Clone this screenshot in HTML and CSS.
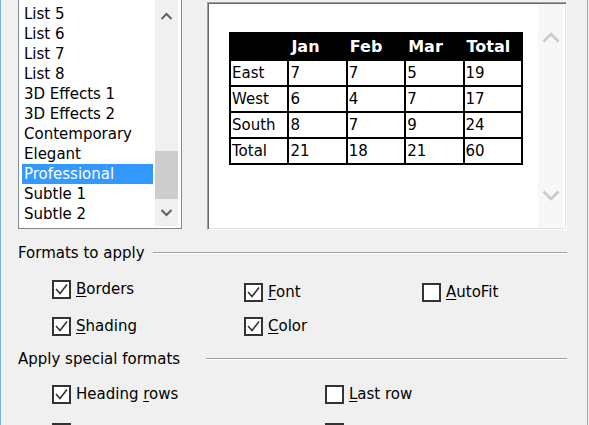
FILE: index.html
```html
<!DOCTYPE html>
<html>
<head>
<meta charset="utf-8">
<title>Table AutoFormat</title>
<link rel="stylesheet" href="styles.css">
</head>
<body>
<div class="window">
  <div class="top">
    <div class="listbox">
      <ul class="items">
        <li>List 5</li>
        <li>List 6</li>
        <li>List 7</li>
        <li>List 8</li>
        <li>3D Effects 1</li>
        <li>3D Effects 2</li>
        <li>Contemporary</li>
        <li>Elegant</li>
        <li class="sel">Professional</li>
        <li>Subtle 1</li>
        <li>Subtle 2</li>
      </ul>
      <div class="vscroll">
        <div class="arrow up"><svg width="13" height="8" viewBox="0 0 13 8"><polyline points="1.5,7 6.5,2 11.5,7" fill="none" stroke="#606060" stroke-width="2"/></svg></div>
        <div class="track"><div class="thumb"></div></div>
        <div class="arrow down"><svg width="13" height="8" viewBox="0 0 13 8"><polyline points="1.5,1 6.5,6 11.5,1" fill="none" stroke="#606060" stroke-width="2"/></svg></div>
      </div>
    </div>
    <div class="preview">
      <div class="canvas">
        <table class="sample">
          <thead>
            <tr><th></th><th>Jan</th><th>Feb</th><th>Mar</th><th>Total</th></tr>
          </thead>
          <tbody>
            <tr><td>East</td><td>7</td><td>7</td><td>5</td><td>19</td></tr>
            <tr><td>West</td><td>6</td><td>4</td><td>7</td><td>17</td></tr>
            <tr><td>South</td><td>8</td><td>7</td><td>9</td><td>24</td></tr>
            <tr><td>Total</td><td>21</td><td>18</td><td>21</td><td>60</td></tr>
          </tbody>
        </table>
      </div>
      <div class="vscroll disabled">
        <svg class="up" width="18" height="11" viewBox="0 0 18 11"><polyline points="1.5,9.5 9,2 16.5,9.5" fill="none" stroke="#c9c9c9" stroke-width="2.6"/></svg>
        <svg class="down" width="18" height="11" viewBox="0 0 18 11"><polyline points="1.5,1.5 9,9 16.5,1.5" fill="none" stroke="#c9c9c9" stroke-width="2.6"/></svg>
      </div>
    </div>
  </div>

  <section class="group first">
    <div class="group-title"><span>Formats to apply</span><span class="rule rule-a"></span></div>
    <div class="opts fmt">
      <div class="col c1">
        <label class="cb"><span class="box checked"><svg width="15" height="15" viewBox="0 0 15 15"><polyline points="2,7 6,11.5 13,2.5" fill="none" stroke="#333" stroke-width="1.6"/></svg></span><span class="txt"><u>B</u>orders</span></label>
        <label class="cb"><span class="box checked"><svg width="15" height="15" viewBox="0 0 15 15"><polyline points="2,7 6,11.5 13,2.5" fill="none" stroke="#333" stroke-width="1.6"/></svg></span><span class="txt"><u>S</u>hading</span></label>
      </div>
      <div class="col c2">
        <label class="cb"><span class="box checked"><svg width="15" height="15" viewBox="0 0 15 15"><polyline points="2,7 6,11.5 13,2.5" fill="none" stroke="#333" stroke-width="1.6"/></svg></span><span class="txt"><u>F</u>ont</span></label>
        <label class="cb"><span class="box checked"><svg width="15" height="15" viewBox="0 0 15 15"><polyline points="2,7 6,11.5 13,2.5" fill="none" stroke="#333" stroke-width="1.6"/></svg></span><span class="txt"><u>C</u>olor</span></label>
      </div>
      <div class="col c3">
        <label class="cb"><span class="box"></span><span class="txt"><u>A</u>utoFit</span></label>
      </div>
    </div>
  </section>

  <section class="group second">
    <div class="group-title"><span>Apply special formats</span><span class="rule rule-b"></span></div>
    <div class="opts special">
      <label class="cb"><span class="box checked"><svg width="15" height="15" viewBox="0 0 15 15"><polyline points="2,7 6,11.5 13,2.5" fill="none" stroke="#333" stroke-width="1.6"/></svg></span><span class="txt">Heading <u>r</u>ows</span></label>
      <label class="cb"><span class="box"></span><span class="txt"><u>L</u>ast row</span></label>
      <label class="cb"><span class="box checked"><svg width="15" height="15" viewBox="0 0 15 15"><polyline points="2,7 6,11.5 13,2.5" fill="none" stroke="#333" stroke-width="1.6"/></svg></span><span class="txt">First <u>c</u>olumn</span></label>
      <label class="cb"><span class="box"></span><span class="txt">Last c<u>o</u>lumn</span></label>
    </div>
  </section>
</div>
</body>
</html>
```

FILE: styles.css
```css
* { box-sizing: border-box; }

body {
  margin: 0;
  width: 589px;
  height: 425px;
  overflow: hidden;
  background: #f0f0f0;
  font-family: "DejaVu Sans", sans-serif;
  font-size: 15px;
  color: #000;
}

.window {
  width: 588px;
  height: 425px;
  border-left: 1px solid #7ab0e6;
  border-right: 1px solid #7ab0e6;
  padding: 0 20px 0 17px;
}

/* ---------- top row ---------- */
.top {
  display: flex;
  align-items: flex-start;
  height: 230px;
}

.listbox {
  width: 164px;
  height: 229px;
  background: #fff;
  border: 1px solid #828790;
  border-top: 0;
  padding: 0 3px;
  display: flex;
}

.items {
  list-style: none;
  margin: 0 2px 0 0;
  padding: 4px 0 0;
  width: 131px;
  flex: none;
}

.items li {
  height: 20px;
  line-height: 20px;
  padding-left: 2px;
  white-space: nowrap;
}

.items li.sel {
  background: #3399ff;
  color: #fff;
}

.listbox .vscroll {
  width: 23px;
  height: 226px;
  background: #f0f0f0;
  display: flex;
  flex-direction: column;
}

.listbox .arrow {
  display: flex;
  align-items: center;
  justify-content: center;
}

.listbox .arrow.up { height: 32px; }
.listbox .arrow.down { height: 26px; }

.listbox .track {
  flex: 1;
  display: flex;
  flex-direction: column;
  justify-content: flex-end;
}

.listbox .thumb {
  height: 48px;
  margin-bottom: 1px;
  background: #cdcdcd;
}

.preview {
  margin: 2px 0 0 25px;
  width: 364px;
  height: 228px;
  background: #fff;
  border: 1px solid;
  border-color: #a0a0a0 #fff #fff #a0a0a0;
  box-shadow: inset 1px 1px 0 #696969, inset -1px -1px 0 #e3e3e3;
  padding: 1px;
  display: flex;
}

.canvas {
  flex: 1;
  padding: 28px 0 0 20px;
}

.preview .vscroll {
  width: 25px;
  margin-right: 2px;
  background: #f7f7f7;
  display: flex;
  flex-direction: column;
  align-items: center;
  justify-content: space-between;
  padding: 28px 0 27px;
}

/* ---------- sample table ---------- */
.sample {
  border-collapse: collapse;
  table-layout: fixed;
  width: 294px;
  font-size: 15px;
}

.sample th,
.sample td {
  border: 2px solid #000;
  text-align: left;
  white-space: nowrap;
  overflow: hidden;
}

.sample th {
  background: #000;
  color: #fff;
  font-weight: bold;
  font-size: 16px;
  height: 27px;
  padding: 0 2px;
}

.sample td {
  height: 26px;
  padding: 0 1px;
}

/* ---------- option groups ---------- */
.group.first { margin-top: 13px; }
.group.second { margin-top: 13px; }

.group-title {
  display: flex;
  align-items: center;
  height: 20px;
  line-height: 20px;
  white-space: nowrap;
}

.rule {
  flex: 1;
  height: 2px;
  border-top: 1px solid #a0a0a0;
  border-bottom: 1px solid #fff;
}

.rule-a { margin-left: 8px; }
.rule-b { margin-left: 26px; }

.opts {
  margin-top: 15px;
  padding-left: 34px;
}

.fmt {
  display: flex;
}

.fmt .col {
  display: flex;
  flex-direction: column;
}

.fmt .c1 { width: 192px; gap: 17px; padding-top: 1px; }
.fmt .c2 { width: 178px; gap: 14px; padding-top: 4px; }
.fmt .c3 { padding-top: 4px; }

.special {
  display: grid;
  grid-template-columns: 273px auto;
  row-gap: 18px;
}

.cb {
  display: flex;
  align-items: center;
  height: 20px;
  line-height: 20px;
  white-space: nowrap;
}

.box {
  width: 19px;
  height: 19px;
  border: 2px solid #333;
  background: #fff;
  margin-right: 5px;
  display: flex;
  align-items: center;
  justify-content: center;
  flex: none;
}

.txt u {
  text-decoration-thickness: 1px;
  text-underline-offset: 2px;
}
```
